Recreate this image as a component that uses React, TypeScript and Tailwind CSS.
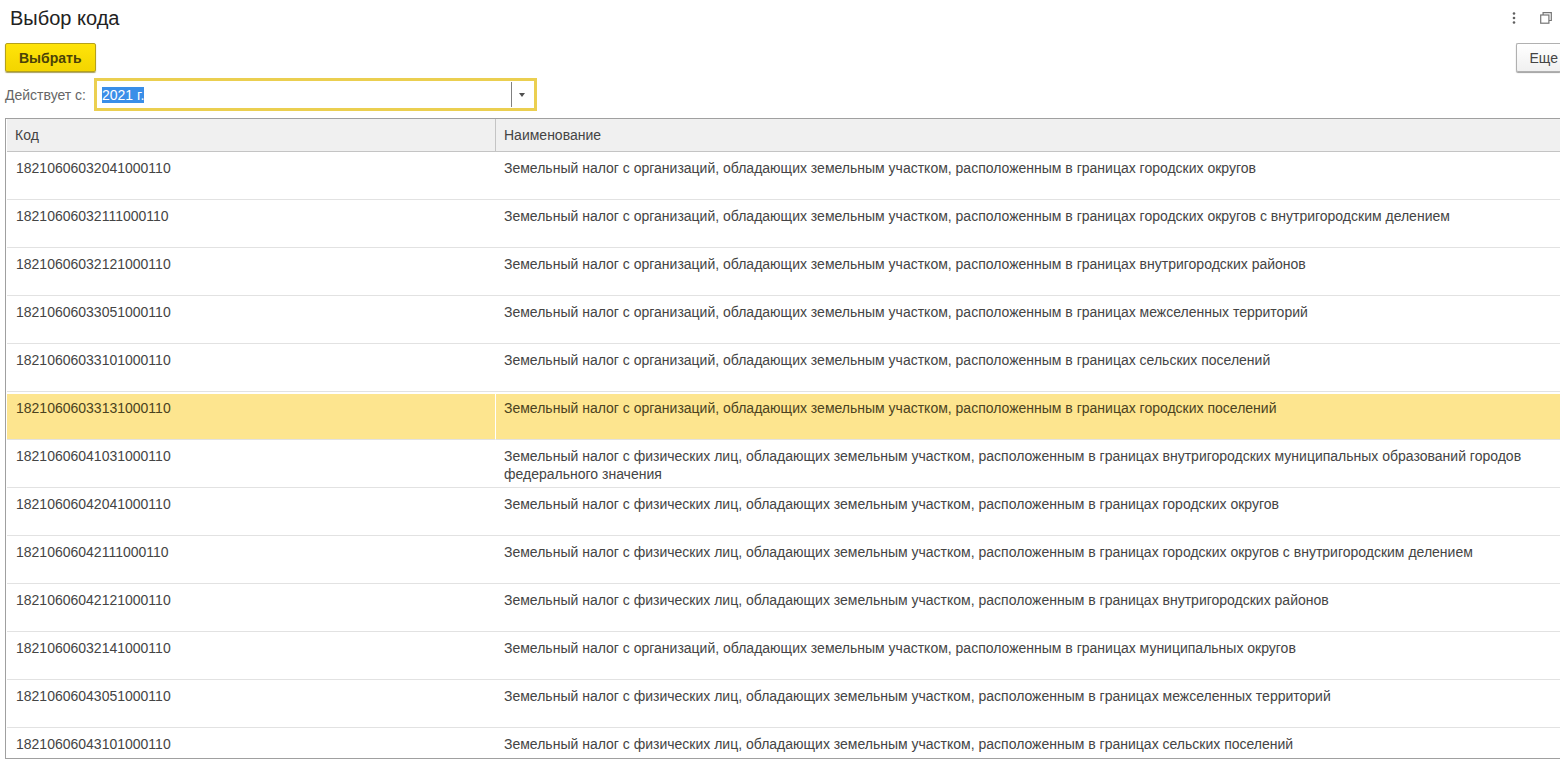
import { useEffect, useRef, useState } from "react"
import clsx from "clsx"

const codes = [
  {
    code: "18210606032041000110",
    name: "Земельный налог с организаций, обладающих земельным участком, расположенным в границах городских округов",
  },
  {
    code: "18210606032111000110",
    name: "Земельный налог с организаций, обладающих земельным участком, расположенным в границах городских округов с внутригородским делением",
  },
  {
    code: "18210606032121000110",
    name: "Земельный налог с организаций, обладающих земельным участком, расположенным в границах внутригородских районов",
  },
  {
    code: "18210606033051000110",
    name: "Земельный налог с организаций, обладающих земельным участком, расположенным в границах межселенных территорий",
  },
  {
    code: "18210606033101000110",
    name: "Земельный налог с организаций, обладающих земельным участком, расположенным в границах сельских поселений",
  },
  {
    code: "18210606033131000110",
    name: "Земельный налог с организаций, обладающих земельным участком, расположенным в границах городских поселений",
  },
  {
    code: "18210606041031000110",
    name: "Земельный налог с физических лиц, обладающих земельным участком, расположенным в границах внутригородских муниципальных образований городов федерального значения",
  },
  {
    code: "18210606042041000110",
    name: "Земельный налог с физических лиц, обладающих земельным участком, расположенным в границах городских округов",
  },
  {
    code: "18210606042111000110",
    name: "Земельный налог с физических лиц, обладающих земельным участком, расположенным в границах городских округов с внутригородским делением",
  },
  {
    code: "18210606042121000110",
    name: "Земельный налог с физических лиц, обладающих земельным участком, расположенным в границах внутригородских районов",
  },
  {
    code: "18210606032141000110",
    name: "Земельный налог с организаций, обладающих земельным участком, расположенным в границах муниципальных округов",
  },
  {
    code: "18210606043051000110",
    name: "Земельный налог с физических лиц, обладающих земельным участком, расположенным в границах межселенных территорий",
  },
  {
    code: "18210606043101000110",
    name: "Земельный налог с физических лиц, обладающих земельным участком, расположенным в границах сельских поселений",
  },
]

export default function App() {
  const [selected, setSelected] = useState("18210606033131000110")

  return (
    <main className="flex h-screen flex-col overflow-hidden bg-white pb-1 pl-[5px] font-['Liberation_Sans',Arial,sans-serif] text-sm text-[#444444]">
      <TitleBar />

      <div className="mt-[7px] flex items-center justify-between">
        <button
          type="button"
          className="h-[29px] rounded-xs border border-[#b5a11c] bg-linear-to-b from-[#ffe40a] to-[#f3d500] px-[13px] font-bold text-[#4a4208] shadow-[0_1px_1px_#a8a060]"
        >
          Выбрать
        </button>
        <button
          type="button"
          className="h-[29px] rounded-l-xs border border-r-0 border-[#b0b0b0] bg-linear-to-b from-white to-[#f0f0f0] pr-[2px] pl-[13px] shadow-[0_1px_1px_#a0a0a0]"
        >
          Еще
        </button>
      </div>

      <PeriodField />

      <div className="mt-[7px] min-h-0 flex-1 overflow-hidden border border-r-0 border-[#a0a0a0] pl-px">
        <table className="w-full table-fixed border-separate border-spacing-0 text-left">
          <colgroup>
            <col className="w-[489px]" />
            <col />
          </colgroup>
          <thead>
            <tr className="h-[33px] bg-[#f0f0f0]">
              <th className="border-r border-b border-[#c4c4c4] px-2 font-normal">Код</th>
              <th className="border-b border-[#c4c4c4] px-2 font-normal">Наименование</th>
            </tr>
          </thead>
          <tbody>
            {codes.map((item) => (
              <CodeRow
                key={item.code}
                code={item.code}
                name={item.name}
                isSelected={item.code === selected}
                onSelect={() => setSelected(item.code)}
              />
            ))}
          </tbody>
        </table>
      </div>
    </main>
  )
}

function TitleBar() {
  return (
    <header className="flex h-9 shrink-0 items-center justify-between pr-2 pl-[5px]">
      <h1 className="text-xl text-[#222222]">Выбор кода</h1>
      <div className="flex items-center gap-5">
        <button type="button" aria-label="Меню">
          <svg width="12" height="12" viewBox="0 0 12 12" fill="#606060">
            <circle cx="6" cy="1.5" r="1.3" />
            <circle cx="6" cy="6" r="1.3" />
            <circle cx="6" cy="10.5" r="1.3" />
          </svg>
        </button>
        <button type="button" aria-label="Восстановить окно">
          <svg width="12" height="12" viewBox="0 0 12 12" fill="none" stroke="#757575" strokeWidth="1.2">
            <path d="M3.1 3V.7h8.2v7.8H9" />
            <rect x=".7" y="3" width="8.2" height="8.2" />
          </svg>
        </button>
      </div>
    </header>
  )
}

function PeriodField() {
  const [period, setPeriod] = useState("2021 г.")
  const inputRef = useRef<HTMLInputElement>(null)

  // The field opens focused with its whole value selected
  useEffect(() => {
    inputRef.current?.focus()
    inputRef.current?.select()
  }, [])

  return (
    <div className="mt-[6px] flex items-center gap-2">
      <label htmlFor="period" className="text-[#666666]">
        Действует с:
      </label>
      <div className="flex h-[33px] w-[443px] items-stretch border-3 border-[#ebcf50] py-px">
        <input
          id="period"
          ref={inputRef}
          type="text"
          value={period}
          onChange={(e) => setPeriod(e.target.value)}
          className="min-w-0 flex-1 px-[5px] leading-4 outline-none selection:bg-[#3a8ee8] selection:text-white"
        />
        <button
          type="button"
          aria-label="Выбрать период"
          className="flex w-[23px] items-center border-l border-[#808080] pl-[7px]"
        >
          <svg width="6" height="4" viewBox="0 0 6 4" fill="#505050">
            <path d="M0 0h6L3 4z" />
          </svg>
        </button>
      </div>
    </div>
  )
}

interface CodeRowProps {
  code: string
  name: string
  isSelected: boolean
  onSelect: () => void
}

function CodeRow({ code, name, isSelected, onSelect }: CodeRowProps) {
  return (
    <tr
      onClick={onSelect}
      aria-selected={isSelected}
      className={clsx("h-12 align-top leading-[18px]", isSelected && "text-[#4a4220]")}
    >
      <td
        className={clsx(
          "border-b border-[#e2e2e2] px-[9px] pt-[7px]",
          isSelected && "border-r border-r-white bg-[#fde58f] shadow-[inset_0_2px_0_#ffffff]",
        )}
      >
        {code}
      </td>
      <td
        className={clsx(
          "border-b border-[#e2e2e2] px-2 pt-[7px]",
          isSelected && "bg-[#fde58f] shadow-[inset_0_2px_0_#ffffff]",
        )}
      >
        {name}
      </td>
    </tr>
  )
}
